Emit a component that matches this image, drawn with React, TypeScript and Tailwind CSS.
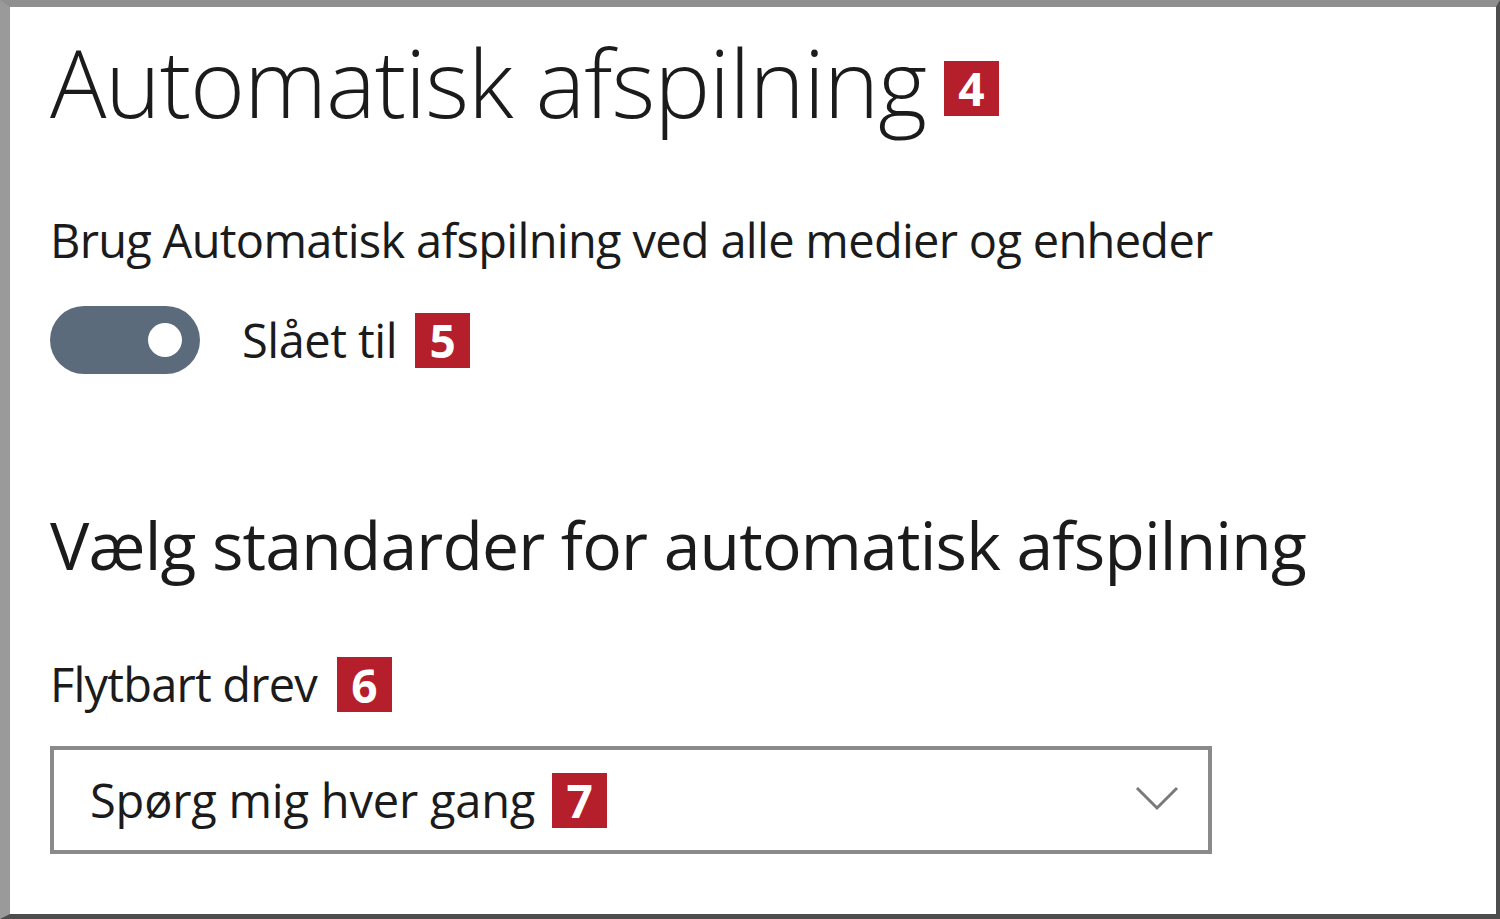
function Badge({ n }: { n: string }) {
  return (
    <span className="inline-flex h-[55px] w-[55px] items-center justify-center bg-[#b51f2b] text-[46px] font-bold leading-none text-white">
      {n}
    </span>
  )
}

export default function App() {
  return (
    <div
      className="h-[919px] w-[1500px] overflow-hidden border-t-[7px] border-l-[10px] border-r-[4px] border-b-[5px] border-t-[#8f8f8f] border-l-[#9a9a9a] border-r-[#4d4d4d] border-b-[#4d4d4d] bg-white text-[#1b1b1b]"
      style={{ fontFamily: '"Open Sans", "Noto Sans", sans-serif' }}
    >
      <div className="flex flex-col pl-[40px]">
        {/* titel */}
        <div className="mt-[20px] flex h-[110px] items-center gap-[18px]">
          <h1 className="text-[94px] font-light leading-none tracking-[-1.1px]">Automatisk afspilning</h1>
          <div className="mt-[12px]">
            <Badge n="4" />
          </div>
        </div>

        <p className="mt-[80px] text-[47px] leading-none tracking-[-0.7px]">
          Brug Automatisk afspilning ved alle medier og enheder
        </p>

        <div className="mt-[42px] flex items-center">
          <div className="flex h-[68px] w-[150px] items-center justify-end rounded-full bg-[#5b6b7b] pr-[18px]">
            <span className="h-[34px] w-[34px] rounded-full bg-white" />
          </div>
          <span className="ml-[42px] text-[47px] leading-none tracking-[-0.5px]">Slået til</span>
          <span className="ml-[18px]">
            <Badge n="5" />
          </span>
        </div>

        <h2 className="mt-[137px] text-[66px] leading-none tracking-[-0.8px]">
          Vælg standarder for automatisk afspilning
        </h2>

        <div className="mt-[80px] flex items-center">
          <span className="text-[47px] leading-none tracking-[-0.8px]">Flytbart drev</span>
          <span className="ml-[20px]">
            <Badge n="6" />
          </span>
        </div>

        <div className="mt-[34px] flex h-[108px] w-[1162px] items-center border-[4px] border-[#8a8a8a] pl-[36px] pr-[30px]">
          <span className="text-[47px] leading-none tracking-[-0.2px]">Spørg mig hver gang</span>
          <span className="ml-[17px]">
            <Badge n="7" />
          </span>
          <svg className="ml-auto mr-[-2px] mt-[-4px]" width="46" height="26" viewBox="0 0 46 26" fill="none">
            <polyline points="3,3 23,23 43,3" stroke="#7a7a7a" strokeWidth="3" />
          </svg>
        </div>
      </div>
    </div>
  )
}
